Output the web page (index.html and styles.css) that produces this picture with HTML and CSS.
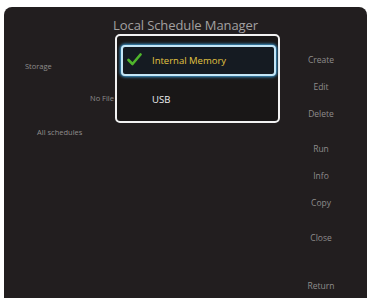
FILE: index.html
```html
<!DOCTYPE html>
<html lang="en">
<head>
<meta charset="UTF-8">
<title>Local Schedule Manager</title>
<link rel="stylesheet" href="styles.css">
</head>
<body>
<div class="screen">
    <div class="title">Local Schedule Manager</div>
    <div class="main">
        <div class="info">
            <div class="storage">Storage</div>
            <div class="nofile">No File</div>
            <div class="all">All schedules</div>
        </div>
        <div class="menu">
            <div class="item">Create</div>
            <div class="item">Edit</div>
            <div class="item">Delete</div>
            <div class="item gap">Run</div>
            <div class="item">Info</div>
            <div class="item">Copy</div>
            <div class="item gap">Close</div>
            <div class="item return">Return</div>
        </div>
    </div>

    <div class="popup">
        <div class="option selected">
            <svg class="check" width="15" height="13" viewBox="0 0 15 13">
                <path d="M1.5 7 L5.5 11 L13.5 1.5" fill="none" stroke="#4fb52c" stroke-width="2.6" stroke-linecap="round" stroke-linejoin="round"/>
            </svg>
            <span>Internal Memory</span>
        </div>
        <div class="option">
            <span>USB</span>
        </div>
    </div>
</div>
</body>
</html>
```

FILE: styles.css
```css
body {
    margin: 0;
    background: #ffffff;
    font-family: "Open Sans", "DejaVu Sans", sans-serif;
    overflow: hidden;
}
.screen {
    position: relative;
    margin: 7px 3px 0 4px;
    height: 300px;
    background: #221e1f;
    border-radius: 8px 8px 0 0;
    color: #9a9898;
}
.title {
    padding-top: 8px;
    height: 20px;
    line-height: 20px;
    text-align: center;
    font-size: 13px;
    color: #a3a1a1;
    letter-spacing: -0.1px;
}
.main {
    display: flex;
    justify-content: space-between;
}
.info {
    font-size: 7.5px;
    color: #8f8d8d;
}
.storage {
    margin: 26px 0 0 21px;
    line-height: 10px;
}
.nofile {
    margin: 22px 0 0 86px;
    line-height: 10px;
}
.all {
    margin: 24px 0 0 33px;
    line-height: 10px;
}
.menu {
    display: flex;
    flex-direction: column;
    align-items: center;
    width: 60px;
    margin-right: 16px;
    padding-top: 19px;
    font-size: 8.5px;
    color: #8e8c8c;
}
.item {
    height: 27px;
    line-height: 12px;
}
.gap {
    margin-top: 8px;
}
.return {
    margin-top: 21px;
}
.popup {
    position: absolute;
    left: 111px;
    top: 27px;
    width: 155px;
    height: 76px;
    border: 2px solid #f2f2f2;
    border-radius: 5px;
    background: #191717;
    padding: 9px 2px 0 4px;
}
.option {
    display: flex;
    align-items: center;
    height: 31px;
    padding-left: 31px;
    font-size: 9.5px;
    color: #f0f0f0;
    box-sizing: border-box;
}
.selected {
    position: relative;
    border: 2px solid #c4e6f6;
    border-radius: 4px;
    background: #151b22;
    box-shadow: 0 0 3px 1px #3f9fd8;
    color: #e2c441;
    padding-left: 29px;
}
.check {
    position: absolute;
    left: 4px;
    top: 6px;
}
.option + .option {
    margin-top: 8px;
}
```
